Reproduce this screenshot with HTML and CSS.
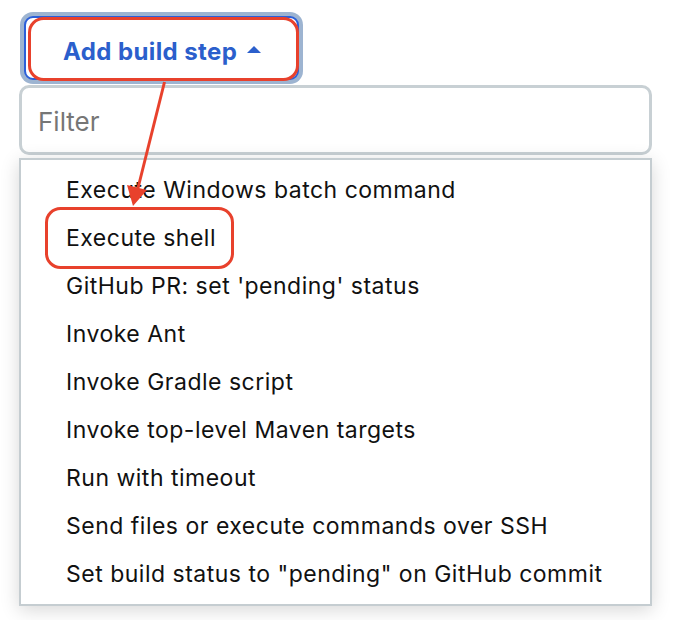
FILE: index.html
```html
<!DOCTYPE html>
<html>
<head>
<meta charset="utf-8">
<link rel="stylesheet" href="styles.css">
</head>
<body>
<div class="page">
  <button class="add-btn" type="button">Add build step <span class="caret"></span></button>
  <div class="filter">Filter</div>
  <ul class="menu">
    <li>Execute Windows batch command</li>
    <li>Execute shell</li>
    <li>GitHub PR: set 'pending' status</li>
    <li>Invoke Ant</li>
    <li>Invoke Gradle script</li>
    <li>Invoke top-level Maven targets</li>
    <li>Run with timeout</li>
    <li>Send files or execute commands over SSH</li>
    <li>Set build status to "pending" on GitHub commit</li>
  </ul>
  <svg class="annot" width="678" height="620" viewBox="0 0 678 620">
    <rect x="29.5" y="18.5" width="268" height="61" rx="14" fill="none" stroke="#e8412c" stroke-width="3"/>
    <rect x="46.5" y="208.5" width="186" height="59" rx="14" fill="none" stroke="#e8412c" stroke-width="3"/>
    <line x1="164.5" y1="82" x2="138" y2="188" stroke="#e8412c" stroke-width="3"/>
    <polygon points="133,206 127,185 147,190" fill="#e8412c"/>
  </svg>
</div>
</body>
</html>
```
FILE: styles.css
```css
html, body {
  margin: 0;
  padding: 0;
  background: #ffffff;
}
.page {
  position: relative;
  width: 678px;
  height: 620px;
  padding: 16px 0 0 19px;
  box-sizing: border-box;
  font-family: Inter, "Noto Sans", sans-serif;
}
.add-btn {
  display: flex;
  align-items: center;
  justify-content: flex-start;
  gap: 10px;
  margin-left: 5px;
  width: 275px;
  height: 64px;
  box-sizing: border-box;
  border: 2px solid #2b5fd9;
  border-radius: 9px;
  box-shadow: 0 0 0 4px #9db4d1;
  background: #fff;
  color: #2b5fcc;
  font-family: Inter, "Noto Sans", sans-serif;
  font-weight: 700;
  font-size: 24px;
  letter-spacing: 0.4px;
  padding: 7px 0 0 37px;
}
.caret {
  width: 0;
  height: 0;
  border-left: 7px solid transparent;
  border-right: 7px solid transparent;
  border-bottom: 7px solid #2b5fcc;
  margin-top: -5px;
}
.filter {
  margin-top: 5px;
  width: 633px;
  height: 70px;
  box-sizing: border-box;
  border: 3px solid #c8d0d4;
  border-radius: 10px;
  padding: 2px 0 0 16px;
  display: flex;
  align-items: center;
  color: #767676;
  font-size: 26px;
}
.menu {
  list-style: none;
  margin: 3px 0 0 0;
  padding: 6px 0 6px 0;
  width: 633px;
  box-sizing: border-box;
  border: 2px solid #c5cdd1;
  background: #fff;
  box-shadow: 0 4px 18px rgba(0, 0, 0, 0.16);
}
.menu li {
  height: 48px;
  display: flex;
  align-items: center;
  padding-left: 45px;
  font-size: 23px;
  letter-spacing: 0.5px;
  color: #111;
}
.annot {
  position: absolute;
  left: 0;
  top: 0;
  pointer-events: none;
}
```
